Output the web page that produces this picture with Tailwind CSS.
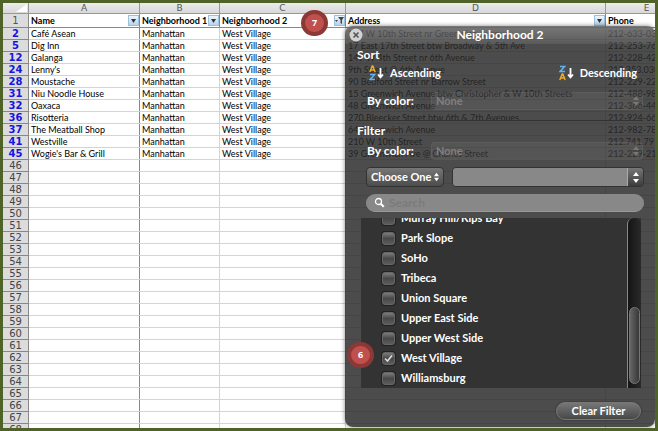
<!DOCTYPE html>
<html lang="en">
<head>
  <meta charset="UTF-8">
  <meta name="viewport" content="width=device-width, initial-scale=1.0">
  <title>Restaurants - Filter</title>
  <script src="https://cdn.jsdelivr.net/npm/@tailwindcss/browser@4"></script>
</head>
<body class="bg-white font-['Lato','Open_Sans',sans-serif] text-black">

  <main class="relative h-screen overflow-hidden border-3 border-[#4f6228] bg-white">

    <!-- Spreadsheet -->
    <table class="w-full table-fixed border-separate border-spacing-0 text-[9px] leading-[11px] whitespace-nowrap">
      <colgroup>
        <col class="w-[26px]">
        <col class="w-[111px]">
        <col class="w-[80px]">
        <col class="w-[126px]">
        <col class="w-[260px]">
        <col>
      </colgroup>
      <thead>
        <tr class="h-[11px] bg-linear-to-b from-[#ececec] to-[#d6d6d6] font-['DejaVu_Sans',sans-serif] text-[9px] leading-[10px] text-[#555]">
          <th class="border-r border-b border-[#999] p-0">
            <svg class="ml-auto block h-2 w-3" viewBox="0 0 12 8"><path d="M11 0V8H0Z" fill="#fff"/></svg>
          </th>
          <th class="border-r border-b border-[#999] p-0 font-normal">A</th>
          <th class="border-r border-b border-[#999] p-0 font-normal">B</th>
          <th class="border-r border-b border-[#999] p-0 font-normal">C</th>
          <th class="border-r border-b border-[#999] p-0 font-normal">D</th>
          <th class="border-b border-[#999] p-0 pl-8 font-normal">E</th>
        </tr>
        <tr class="h-[14px] text-left text-[9px] leading-[12px] font-extrabold">
          <th class="border-r border-b border-[#888] bg-[#dcdcdc] p-0 text-center font-['DejaVu_Sans',sans-serif] text-[10px] font-normal text-[#555]">1</th>
          <th class="border-r border-b border-[#888] p-0 pl-0.5">
            <div class="flex items-center justify-between">Name
              <button aria-label="Filter Name" class="flex h-[11px] w-[11px] items-center justify-center border border-[#9fc0dc] bg-linear-to-b from-[#eef6fd] to-[#b5d2ec]"><svg class="h-1 w-[5px]" viewBox="0 0 5 4"><path d="M0 0H5L2.5 4Z" fill="#333"/></svg></button>
            </div>
          </th>
          <th class="border-r border-b border-[#888] p-0 pl-0.5">
            <div class="flex items-center justify-between">Neighborhood 1
              <button aria-label="Filter Neighborhood 1" class="flex h-[11px] w-[11px] items-center justify-center border border-[#9fc0dc] bg-linear-to-b from-[#eef6fd] to-[#b5d2ec]"><svg class="h-1 w-[5px]" viewBox="0 0 5 4"><path d="M0 0H5L2.5 4Z" fill="#333"/></svg></button>
            </div>
          </th>
          <th class="border-r border-b border-[#888] p-0 pl-0.5">
            <div class="flex items-center justify-between">Neighborhood 2
              <button aria-label="Filter Neighborhood 2" class="flex h-[11px] w-[11px] items-center justify-center border border-[#9fc0dc] bg-linear-to-b from-[#eef6fd] to-[#b5d2ec]"><svg class="h-[7px] w-[9px]" viewBox="0 0 9 7"><path d="M0 3H3L1.5 5ZM3 0H9L7 3V7L5.500 6V3Z" fill="#444"/></svg></button>
            </div>
          </th>
          <th class="border-r border-b border-[#888] p-0 pl-0.5">
            <div class="flex items-center justify-between">Address
              <button aria-label="Filter Address" class="flex h-[11px] w-[11px] items-center justify-center border border-[#9fc0dc] bg-linear-to-b from-[#eef6fd] to-[#b5d2ec]"><svg class="h-1 w-[5px]" viewBox="0 0 5 4"><path d="M0 0H5L2.5 4Z" fill="#333"/></svg></button>
            </div>
          </th>
          <th class="border-b border-[#888] p-0 pl-0.5">Phone</th>
        </tr>
      </thead>
      <tbody id="rows"></tbody>
    </table>

    <!-- Filter panel -->
    <form class="absolute top-[23px] right-0 bottom-px flex w-[310px] flex-col overflow-hidden rounded-lg bg-[#2a2a2a]/84 pb-[7px] text-[12px] leading-4 font-bold text-white shadow-[0_0_4px_rgba(0,0,0,0.5)]">
      <header class="relative flex h-[18px] shrink-0 items-center justify-center bg-linear-to-b from-white/25 to-white/8">
        <button type="button" aria-label="Close" class="absolute top-0.5 left-1">
          <svg class="block h-[14px] w-[14px]" viewBox="0 0 14 14"><circle cx="7" cy="7" r="6.500" fill="#d2d2d2"/><path d="M4.500 4.500L9.500 9.500M9.500 4.500L4.500 9.500" stroke="#555" stroke-width="1.600"/></svg>
        </button>
        <h1>Neighborhood 2</h1>
      </header>

      <h2 class="mt-[3px] ml-3">Sort</h2>
      <div class="mt-0.5 flex h-4 items-center justify-between pr-[18px] pl-6 text-[11px]">
        <button type="button" class="flex items-center gap-1.5">
          <svg class="h-4 w-[15px]" viewBox="0 0 15 16" aria-hidden="true">
            <path d="M.8 7L3.200 1H3.800L6.200 7M1.800 5H5.200" fill="none" stroke="#f5ab1c" stroke-width="1.500"/>
            <path d="M1 9.600H5.600L1.200 14.400H6" fill="none" stroke="#5fb4f0" stroke-width="1.500"/>
            <path d="M11.500 3V12M9 9.500L11.500 12.300L14 9.500" fill="none" stroke="#fff" stroke-width="1.800"/>
          </svg>
          Ascending
        </button>
        <button type="button" class="flex items-center gap-1.5">
          <svg class="h-4 w-[15px]" viewBox="0 0 15 16" aria-hidden="true">
            <path d="M1 1.600H5.600L1.200 6.400H6" fill="none" stroke="#5fb4f0" stroke-width="1.500"/>
            <path d="M.8 15L3.200 9H3.800L6.200 15M1.800 13H5.200" fill="none" stroke="#f5ab1c" stroke-width="1.500"/>
            <path d="M11.500 3V12M9 9.500L11.500 12.300L14 9.500" fill="none" stroke="#fff" stroke-width="1.800"/>
          </svg>
          Descending
        </button>
      </div>
      <div class="mt-[11px] flex h-[18px] items-center pr-3 pl-[22px]">
        <label for="sort-color" class="w-16 shrink-0">By color:</label>
        <div class="relative flex-1">
          <select id="sort-color" disabled class="block h-[18px] w-full appearance-none rounded border border-white/5 bg-white/5 pl-1 text-[11px] leading-4 text-[#808080] opacity-100"><option>None</option></select>
          <svg class="pointer-events-none absolute top-1 right-1 h-[10px] w-[6px]" viewBox="0 0 6 10"><path d="M0 4L3 0L6 4ZM0 6L3 10L6 6Z" fill="#777"/></svg>
        </div>
      </div>

      <h2 class="mx-3 mt-[10px] h-[19px] border-t border-[#333] pt-0.5">Filter</h2>
      <div class="mt-[3px] flex h-[18px] items-center pr-3 pl-[22px]">
        <label for="filter-color" class="w-16 shrink-0">By color:</label>
        <div class="relative flex-1">
          <select id="filter-color" disabled class="block h-[18px] w-full appearance-none rounded border border-white/5 bg-white/5 pl-1 text-[11px] leading-4 text-[#808080] opacity-100"><option>None</option></select>
          <svg class="pointer-events-none absolute top-1 right-1 h-[10px] w-[6px]" viewBox="0 0 6 10"><path d="M0 4L3 0L6 4ZM0 6L3 10L6 6Z" fill="#777"/></svg>
        </div>
      </div>
      <div class="mt-[7px] flex h-5 items-center gap-2 pr-[11px] pl-[21px]">
        <div class="relative w-[78px]">
          <select aria-label="Condition" class="block h-5 w-full appearance-none rounded border border-[#333] bg-linear-to-b from-[#777] to-[#4c4c4c] pl-1 text-[11px] leading-4"><option>Choose One</option></select>
          <svg class="pointer-events-none absolute top-[5px] right-[5px] h-[10px] w-[5px]" viewBox="0 0 6 10"><path d="M0 4L3 0L6 4ZM0 6L3 10L6 6Z" fill="#fff"/></svg>
        </div>
        <div class="flex h-5 flex-1 overflow-hidden rounded border border-[#333]">
          <input type="text" aria-label="Condition value" class="min-w-0 flex-1 bg-[#888] px-1">
          <button type="button" aria-label="Pick value" class="flex w-4 items-center justify-center border-l border-[#aaa] bg-linear-to-b from-[#777] to-[#3c3c3c]"><svg class="h-[11px] w-[6px]" viewBox="0 0 6 11"><path d="M0 4L3 0L6 4ZM0 7L3 11L6 7Z" fill="#fff"/></svg></button>
        </div>
      </div>
      <div class="mt-[7px] mr-[11px] ml-[21px] flex h-[18px] shrink-0 items-center gap-1 rounded-full border-b border-[#999] bg-[#888] pl-2">
        <svg class="h-[11px] w-[11px]" viewBox="0 0 11 11" fill="none" stroke="#fff"><circle cx="4.500" cy="4.500" r="3" stroke-width="1.300"/><path d="M6.700 6.700L9.800 9.800" stroke-width="2"/></svg>
        <input type="search" aria-label="Search" placeholder="Search" class="min-w-0 flex-1 bg-transparent text-[12px] leading-4 placeholder:text-[#7b7b7b]">
      </div>

      <!-- Values -->
      <div class="mt-[6px] mr-[14px] ml-4 flex min-h-0 flex-1 bg-[#333]">
        <div id="values" class="flex flex-1 flex-col justify-end overflow-hidden"></div>
        <div class="flex w-[14px] flex-col justify-end rounded-t-md border-l border-[#888] bg-linear-to-r from-[#151515] to-[#2a2a2a] pb-1">
          <div class="mx-px h-[77px] rounded-full border border-[#777] bg-linear-to-r from-[#666] to-[#383838]"></div>
        </div>
      </div>
      <button type="button" class="mt-[14px] mr-[14px] h-[18px] w-[85px] shrink-0 self-end rounded-full border border-[#777] bg-linear-to-b from-[#777] to-[#484848] text-[11px] shadow-[0_0_2px_#222]">Clear Filter</button>
    </form>

    <!-- Step markers -->
    <span class="absolute top-[7px] left-[298px] flex h-[26px] w-[27px] items-center justify-center rounded-full border-4 border-[#8c3836] bg-[#c0504d] font-['Open_Sans',sans-serif] text-[9px] font-bold text-white">7</span>
    <span class="absolute top-[339px] right-[281px] flex h-[26px] w-[27px] items-center justify-center rounded-full border-4 border-[#8c3836] bg-[#c0504d] font-['Open_Sans',sans-serif] text-[9px] font-bold text-white">6</span>
  </main>

  <script>
    const places = [
      [2, 'Café Asean', '117 W 10th Street nr Greenwich Avenue', '212-633-0348'],
      [5, 'Dig Inn', '17 East 17th Street btw Broadway & 5th Ave', '212-253-7676'],
      [12, 'Galanga', '149 W 4th Street nr 6th Avenue', '212-228-4267'],
      [24, "Lenny's", '9th Street @ 6th Avenue', '212.353.0300'],
      [28, 'Moustache', '90 Bedford Street nr Barrow Street', '212-229-2220'],
      [31, 'Niu Noodle House', '15 Greenwich Avenue btw Christopher & W 10th Streets', '212-488-9888'],
      [32, 'Oaxaca', '48 Greenwich Avenue', '212-366-4488'],
      [36, 'Risotteria', '270 Bleecker Street btw 6th & 7th Avenues', '212-924-6664'],
      [37, 'The Meatball Shop', '64 Greenwich Avenue', '212-982-7815'],
      [41, 'Westville', '210 W 10th Street', '212.741.7971'],
      [45, "Wogie's Bar & Grill", '39 Greenwich Ave @ Charles Street', '212-229-2171']
    ];
    // empty rows under the list
    for (let n = 46; n <= 68; n++) places.push([n, '', '', '']);

    const cell = 'overflow-hidden border-b border-[#d4d4d4] p-0 pl-0.5';
    document.getElementById('rows').innerHTML = places.map(([n, name, address, phone]) => `
      <tr class="h-3">
        <th class="border-r border-b border-[#888] bg-[#dcdcdc] p-0 text-center font-['DejaVu_Sans',sans-serif] text-[10px] ${name ? 'font-bold text-[#1414e0]' : 'font-normal text-[#444]'}">${n}</th>
        <td class="${cell} shadow-[inset_-1px_0_#888]">${name}</td>
        <td class="${cell} shadow-[inset_-1px_0_#d4d4d4]">${name && 'Manhattan'}</td>
        <td class="${cell} shadow-[inset_-1px_0_#d4d4d4]">${name && 'West Village'}</td>
        <td class="${cell} shadow-[inset_-1px_0_#d4d4d4]">${address}</td>
        <td class="${cell}">${phone}</td>
      </tr>`).join('');

    const values = ['Murray Hill/Kips Bay', 'Park Slope', 'SoHo', 'Tribeca', 'Union Square',
      'Upper East Side', 'Upper West Side', 'West Village', 'Williamsburg'];
    document.getElementById('values').innerHTML = values.map(v => `
      <label class="flex h-5 shrink-0 items-center gap-1.5 pl-[21px] text-[11px]">
        <span class="relative h-[13px] w-[13px]">
          <input type="checkbox" ${v === 'West Village' ? 'checked' : ''} class="peer block h-[13px] w-[13px] appearance-none rounded-[3px] border border-[#666] bg-linear-to-b from-[#7c7c7c] via-[#484848] to-[#5c5c5c] shadow-[0_0_0_1px_#222]">
          <svg class="pointer-events-none absolute inset-0 hidden h-[13px] w-[13px] peer-checked:block" viewBox="0 0 13 13"><path d="M3 6.500L5.500 9L10 3.500" fill="none" stroke="#ddd" stroke-width="1.600"/></svg>
        </span>
        ${v}
      </label>`).join('');
  </script>

</body>
</html>
